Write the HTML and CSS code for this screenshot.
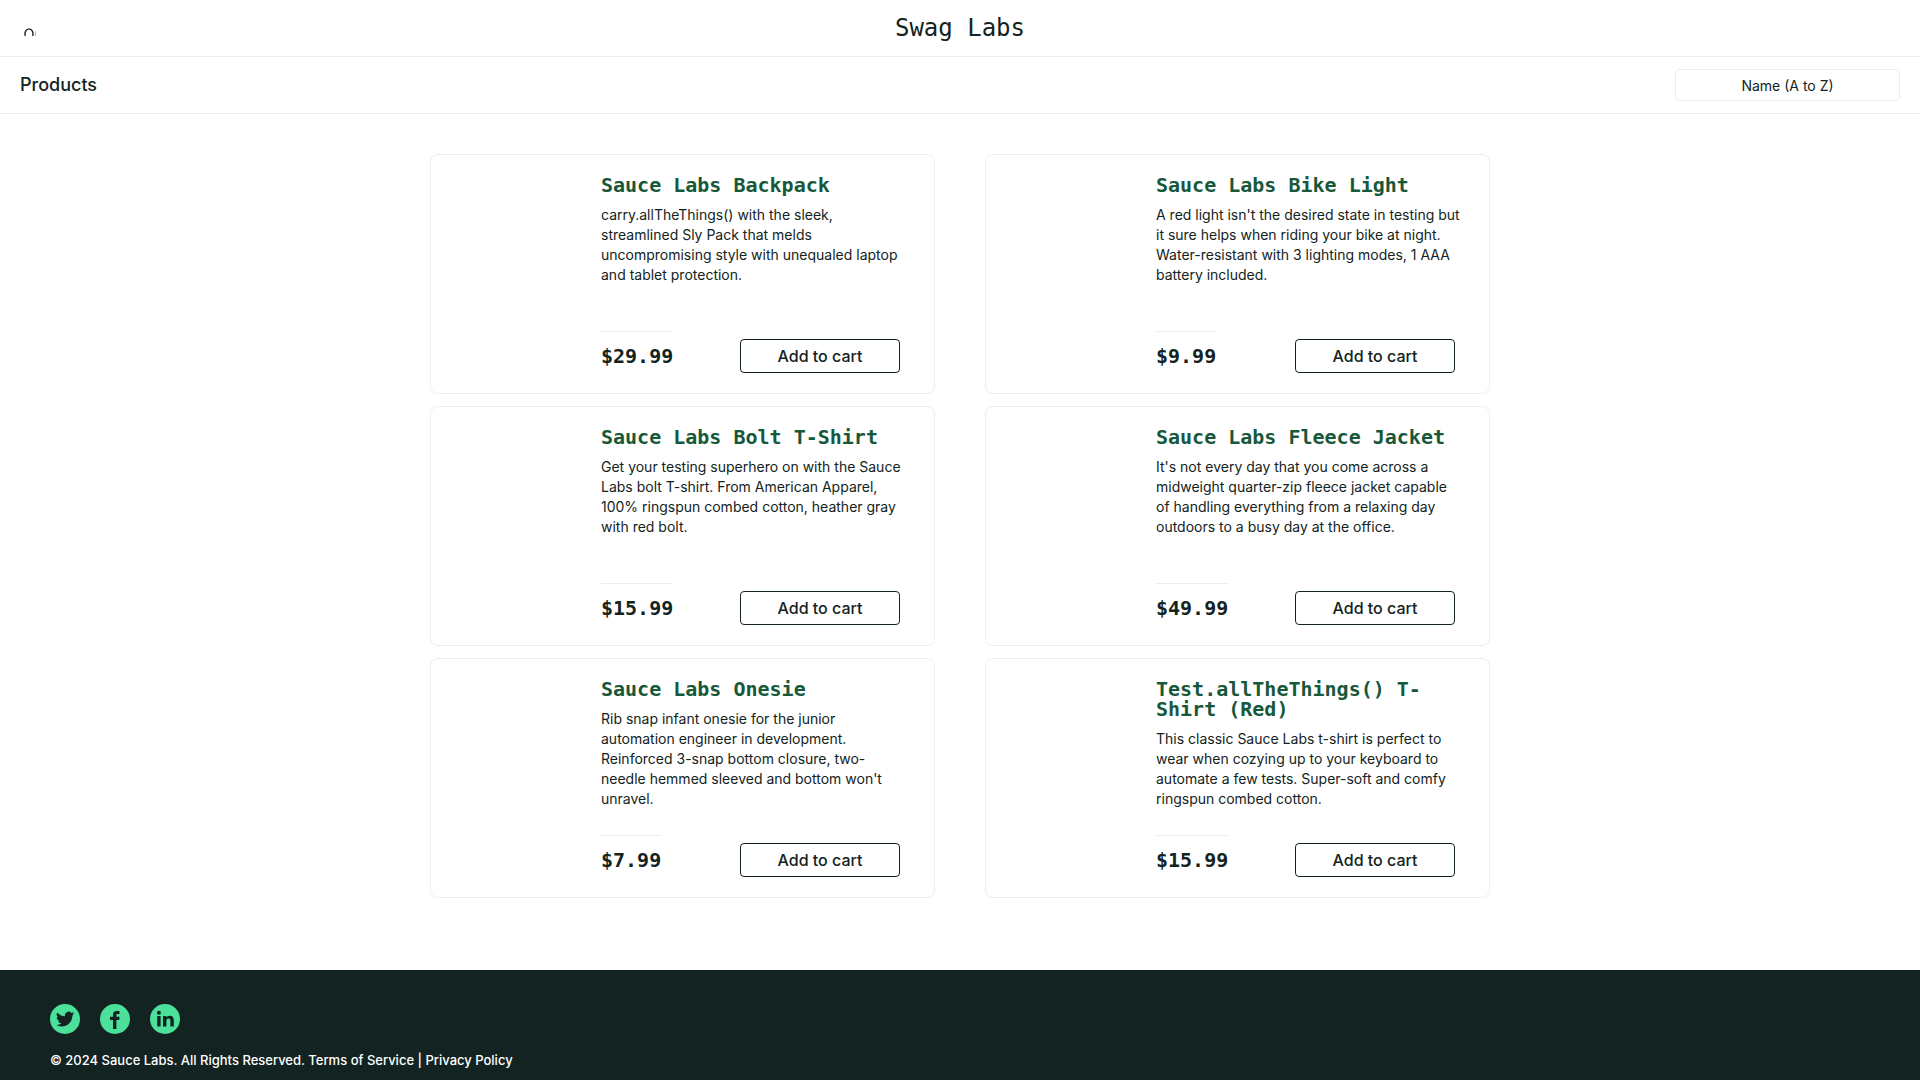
FILE: index.html
```html
<!DOCTYPE html>
<html lang="en">
<head>
<meta charset="utf-8">
<title>Swag Labs</title>
<link rel="stylesheet" href="styles.css">
</head>
<body>
<header class="header">
  <div class="topbar">
    <button class="menu" type="button" aria-label="Open Menu">
      <svg class="menu-icon" viewBox="0 0 12 8"><path d="M1.300 8C.3 4.300 2 .9 5 .9S9.700 4.300 8.700 8" fill="none" stroke="#132322" stroke-width="1.400"/><path d="M11.500 3.500V8" stroke="#132322" stroke-opacity=".35"/></svg>
    </button>
    <div class="logo">Swag Labs</div>
  </div>
  <div class="subbar">
    <h1 class="page-title">Products</h1>
    <select class="sort" aria-label="Sort products">
      <option>Name (A to Z)</option>
      <option>Name (Z to A)</option>
      <option>Price (low to high)</option>
      <option>Price (high to low)</option>
    </select>
  </div>
</header>
<main class="inventory">
  <article class="card">
    <div class="info">
      <a class="name" href="#">Sauce Labs Backpack</a>
      <p class="desc">carry.allTheThings() with the sleek, streamlined Sly Pack that melds uncompromising style with unequaled laptop and tablet protection.</p>
    </div>
    <div class="buy"><div class="price">$29.99</div><button class="add" type="button">Add to cart</button></div>
  </article>
  <article class="card">
    <div class="info">
      <a class="name" href="#">Sauce Labs Bike Light</a>
      <p class="desc">A red light isn't the desired state in testing but it sure helps when riding your bike at night. Water-resistant with 3 lighting modes, 1 AAA battery included.</p>
    </div>
    <div class="buy"><div class="price">$9.99</div><button class="add" type="button">Add to cart</button></div>
  </article>
  <article class="card">
    <div class="info">
      <a class="name" href="#">Sauce Labs Bolt T-Shirt</a>
      <p class="desc">Get your testing superhero on with the Sauce Labs bolt T-shirt. From American Apparel, 100% ringspun combed cotton, heather gray with red bolt.</p>
    </div>
    <div class="buy"><div class="price">$15.99</div><button class="add" type="button">Add to cart</button></div>
  </article>
  <article class="card">
    <div class="info">
      <a class="name" href="#">Sauce Labs Fleece Jacket</a>
      <p class="desc">It's not every day that you come across a midweight quarter-zip fleece jacket capable of handling everything from a relaxing day outdoors to a busy day at the office.</p>
    </div>
    <div class="buy"><div class="price">$49.99</div><button class="add" type="button">Add to cart</button></div>
  </article>
  <article class="card">
    <div class="info">
      <a class="name" href="#">Sauce Labs Onesie</a>
      <p class="desc">Rib snap infant onesie for the junior automation engineer in development. Reinforced 3-snap bottom closure, two-needle hemmed sleeved and bottom won't unravel.</p>
    </div>
    <div class="buy"><div class="price">$7.99</div><button class="add" type="button">Add to cart</button></div>
  </article>
  <article class="card">
    <div class="info">
      <a class="name" href="#">Test.allTheThings() T-Shirt (Red)</a>
      <p class="desc">This classic Sauce Labs t-shirt is perfect to wear when cozying up to your keyboard to automate a few tests. Super-soft and comfy ringspun combed cotton.</p>
    </div>
    <div class="buy"><div class="price">$15.99</div><button class="add" type="button">Add to cart</button></div>
  </article>
</main>
<footer class="footer">
  <nav class="social">
    <a href="#" aria-label="Twitter"><svg viewBox="0 0 30 30"><circle cx="15" cy="15" r="15" fill="#4be19b"/><g transform="translate(6 6) scale(.76)"><path fill="#132322" d="M23.950 4.570a10 10 0 0 1-2.820.77 4.960 4.960 0 0 0 2.160-2.720c-.95.550-2 .95-3.130 1.180a4.920 4.920 0 0 0-8.380 4.480C7.690 8.100 4.070 6.130 1.640 3.160a4.900 4.900 0 0 0 1.520 6.570 4.900 4.900 0 0 1-2.230-.61v.06a4.920 4.920 0 0 0 3.950 4.830 5 5 0 0 1-2.210.08 4.940 4.940 0 0 0 4.600 3.420A9.870 9.870 0 0 1 0 19.540a14 14 0 0 0 7.550 2.210c9.050 0 14-7.500 14-13.980 0-.21 0-.42-.02-.63a9.940 9.940 0 0 0 2.460-2.550z"/></g></svg></a>
    <a href="#" aria-label="Facebook"><svg viewBox="0 0 30 30"><circle cx="15" cy="15" r="15" fill="#4be19b"/><path fill="#132322" d="M13 25V16H10v-3.300h3V10.500C13 8 14.500 6.900 17 6.900h2.500v3.200h-1.700c-1.100 0-1.400.5-1.400 1.400v1.200h3.200L19.200 16h-2.800v9z"/></svg></a>
    <a href="#" aria-label="LinkedIn"><svg viewBox="0 0 30 30"><circle cx="15" cy="15" r="15" fill="#4be19b"/><path fill="#132322" d="M7.200 12h3.400v10.500H7.200zM13 12h3.200v1.500c.6-1.100 1.800-1.800 3.400-1.800 3.400 0 4.200 2.100 4.200 5v5.800h-3.400v-5.200c0-1.500-.2-2.700-1.900-2.700s-2.100 1.200-2.100 2.700v5.200H13z"/><circle cx="8.900" cy="8.800" r="2" fill="#132322"/></svg></a>
  </nav>
  <div class="copy">© 2024 Sauce Labs. All Rights Reserved. Terms of Service | Privacy Policy</div>
</footer>
</body>
</html>
```
FILE: styles.css
```css
* { box-sizing: border-box; }
body {
  margin: 0;
  min-height: 100vh;
  display: flex;
  flex-direction: column;
  background: #fff;
  color: #132322;
  font-family: Inter, sans-serif;
  font-size: 14px;
  line-height: 20px;
}
button, select { font-family: inherit; color: inherit; background: #fff; }
.topbar {
  display: grid;
  grid-template-columns: 1fr auto 1fr;
  align-items: center;
  height: 57px;
  padding: 0 20px;
  border-bottom: 1px solid #ededed;
}
.menu { justify-self: start; display: flex; padding: 8px 4px 0; border: 0; }
.menu-icon { width: 12px; height: 8px; }
.logo { font: 24px/32px "DejaVu Sans Mono", monospace; }
.subbar {
  display: flex;
  align-items: center;
  justify-content: space-between;
  height: 57px;
  padding: 0 20px;
  border-bottom: 1px solid #ededed;
}
.page-title { margin: 0; font-size: 18px; font-weight: 500; }
.sort {
  appearance: none;
  width: 225px;
  height: 32px;
  padding: 0;
  border: 1px solid #ededed;
  border-radius: 4px;
  font-size: 14px;
  text-align: center;
  text-align-last: center;
}
.inventory {
  display: grid;
  grid-template-columns: 1fr 1fr;
  gap: 12px 50px;
  width: 100%;
  max-width: 1060px;
  margin: 40px auto;
}
.card {
  display: flex;
  flex-direction: column;
  justify-content: space-between;
  min-height: 240px;
  padding: 20px 26px 20px 170px;
  border: 1px solid #ededed;
  border-radius: 8px;
}
.name {
  display: block;
  color: #18583a;
  font: bold 20px/20px "DejaVu Sans Mono", monospace;
  text-decoration: none;
}
.desc { margin: 10px 0 0; }
.buy { display: flex; justify-content: space-between; align-items: flex-end; padding-right: 8px; }
.price {
  height: 42px;
  padding-top: 14px;
  border-top: 1px solid #ededed;
  font: bold 20px/20px "DejaVu Sans Mono", monospace;
}
.add {
  width: 160px;
  height: 34px;
  border: 1px solid #132322;
  border-radius: 4px;
  font-size: 16px;
  font-weight: 500;
}
.footer {
  margin-top: auto;
  padding: 34px 50px 10px;
  background: #132322;
  color: #fff;
  font-size: 13px;
  font-weight: 500;
}
.social { display: flex; gap: 20px; margin-bottom: 16px; }
.social a, .social svg { display: block; width: 30px; height: 30px; }
```
